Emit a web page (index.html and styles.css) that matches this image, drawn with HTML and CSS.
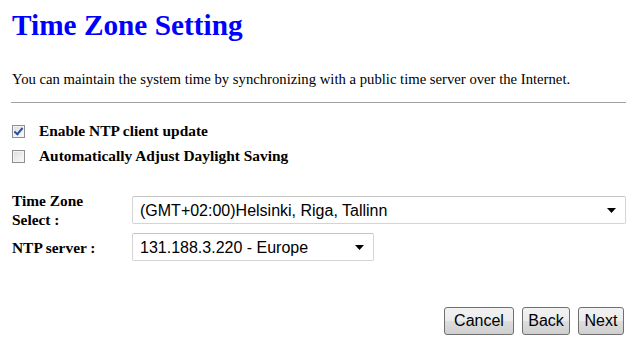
FILE: index.html
```html
<!DOCTYPE html>
<html>
<head>
    <title>Time Zone Setting</title>
    <link rel="stylesheet" href="styles.css">
</head>
<body>
    <h1>Time Zone Setting</h1>

    <p class="intro">You can maintain the system time by synchronizing with a public time server over the Internet.</p>
    <hr>

    <div class="checks">
        <label class="check"><input type="checkbox" checked> <span>Enable NTP client update</span></label>
        <label class="check"><input type="checkbox"> <span>Automatically Adjust Daylight Saving</span></label>
    </div>

    <table class="form">
        <tr class="first">
            <td class="label"><div>Time Zone Select :</div></td>
            <td>
                <div class="pick wide">
                    <select>
                        <option>(GMT+02:00)Helsinki, Riga, Tallinn</option>
                    </select>
                    <svg class="arrow" width="9" height="5" viewBox="0 0 9 5"><path d="M0 0H9L4.5 5Z" fill="#000"/></svg>
                </div>
            </td>
        </tr>
        <tr>
            <td class="label"><div>NTP server :</div></td>
            <td>
                <div class="pick narrow">
                    <select>
                        <option>131.188.3.220 - Europe</option>
                    </select>
                    <svg class="arrow" width="9" height="5" viewBox="0 0 9 5"><path d="M0 0H9L4.5 5Z" fill="#000"/></svg>
                </div>
            </td>
        </tr>
    </table>

    <div class="buttons">
        <button class="cancel">Cancel</button>
        <button class="back">Back</button>
        <button class="next">Next</button>
    </div>
</body>
</html>
```

FILE: styles.css
```css
body { font-family: "Liberation Serif", "Times New Roman", serif; font-size: 14.7px; margin: 0; padding: 8px 7px 0 12px; color: #000; background: #fff; }
h1 { color: #0000ff; font-size: 29.3px; margin: 0 0 29px 0; line-height: 34px; }
.intro { margin: 0 0 14px 0; }
hr { border: none; border-top: 1px solid #a0a0a0; margin: 0 0 0 -1px; }

.checks { margin-top: 19px; display: flex; flex-direction: column; gap: 7px; }
.check { display: flex; align-items: center; font-weight: bold; font-size: 15.4px; height: 18px; }
.check input { appearance: none; -webkit-appearance: none; position: relative; width: 13px; height: 13px; margin: 0 14px 0 0; border: 1px solid #8e8f8f; background: linear-gradient(135deg, #dcdcdc, #fbfbfb); box-shadow: inset 0 0 0 1px #f4f4f4; }
.check input:checked::after { content: ""; position: absolute; left: 3px; top: 0px; width: 3px; height: 7px; border: solid #2a4fa8; border-width: 0 2px 2px 0; transform: rotate(40deg); }

.form { border-collapse: collapse; margin-top: 26px; }
.form td { padding: 0; vertical-align: middle; }
.form .first td { padding-bottom: 4px; }
.form .label { font-weight: bold; font-size: 15.4px; width: 121px; line-height: 19px; }
.form .label div { width: 105px; }

.pick { position: relative; }
.pick select { appearance: none; -webkit-appearance: none; width: 100%; font-family: "Liberation Sans", Arial, sans-serif; font-size: 16px; height: 28px; border: 1px solid #d4d4d4; border-top-color: #c4c4c4; border-radius: 2px; background: #fff; color: #000; padding: 0 24px 0 7px; }
.pick .arrow { position: absolute; right: 10px; top: 12px; pointer-events: none; }
.wide { width: 494px; }
.narrow { width: 242px; }

.buttons { display: flex; justify-content: flex-end; gap: 8px; margin-top: 46px; padding-right: 2px; }
button { font-family: "Liberation Sans", Arial, sans-serif; font-size: 16px; height: 28px; padding: 0; border: 1px solid #707070; border-radius: 3px; background: linear-gradient(#f2f2f2, #ebebeb 48%, #dddddd 52%, #cfcfcf); color: #000; }
.cancel { width: 70px; }
.back { width: 48px; }
.next { width: 46px; }
```
